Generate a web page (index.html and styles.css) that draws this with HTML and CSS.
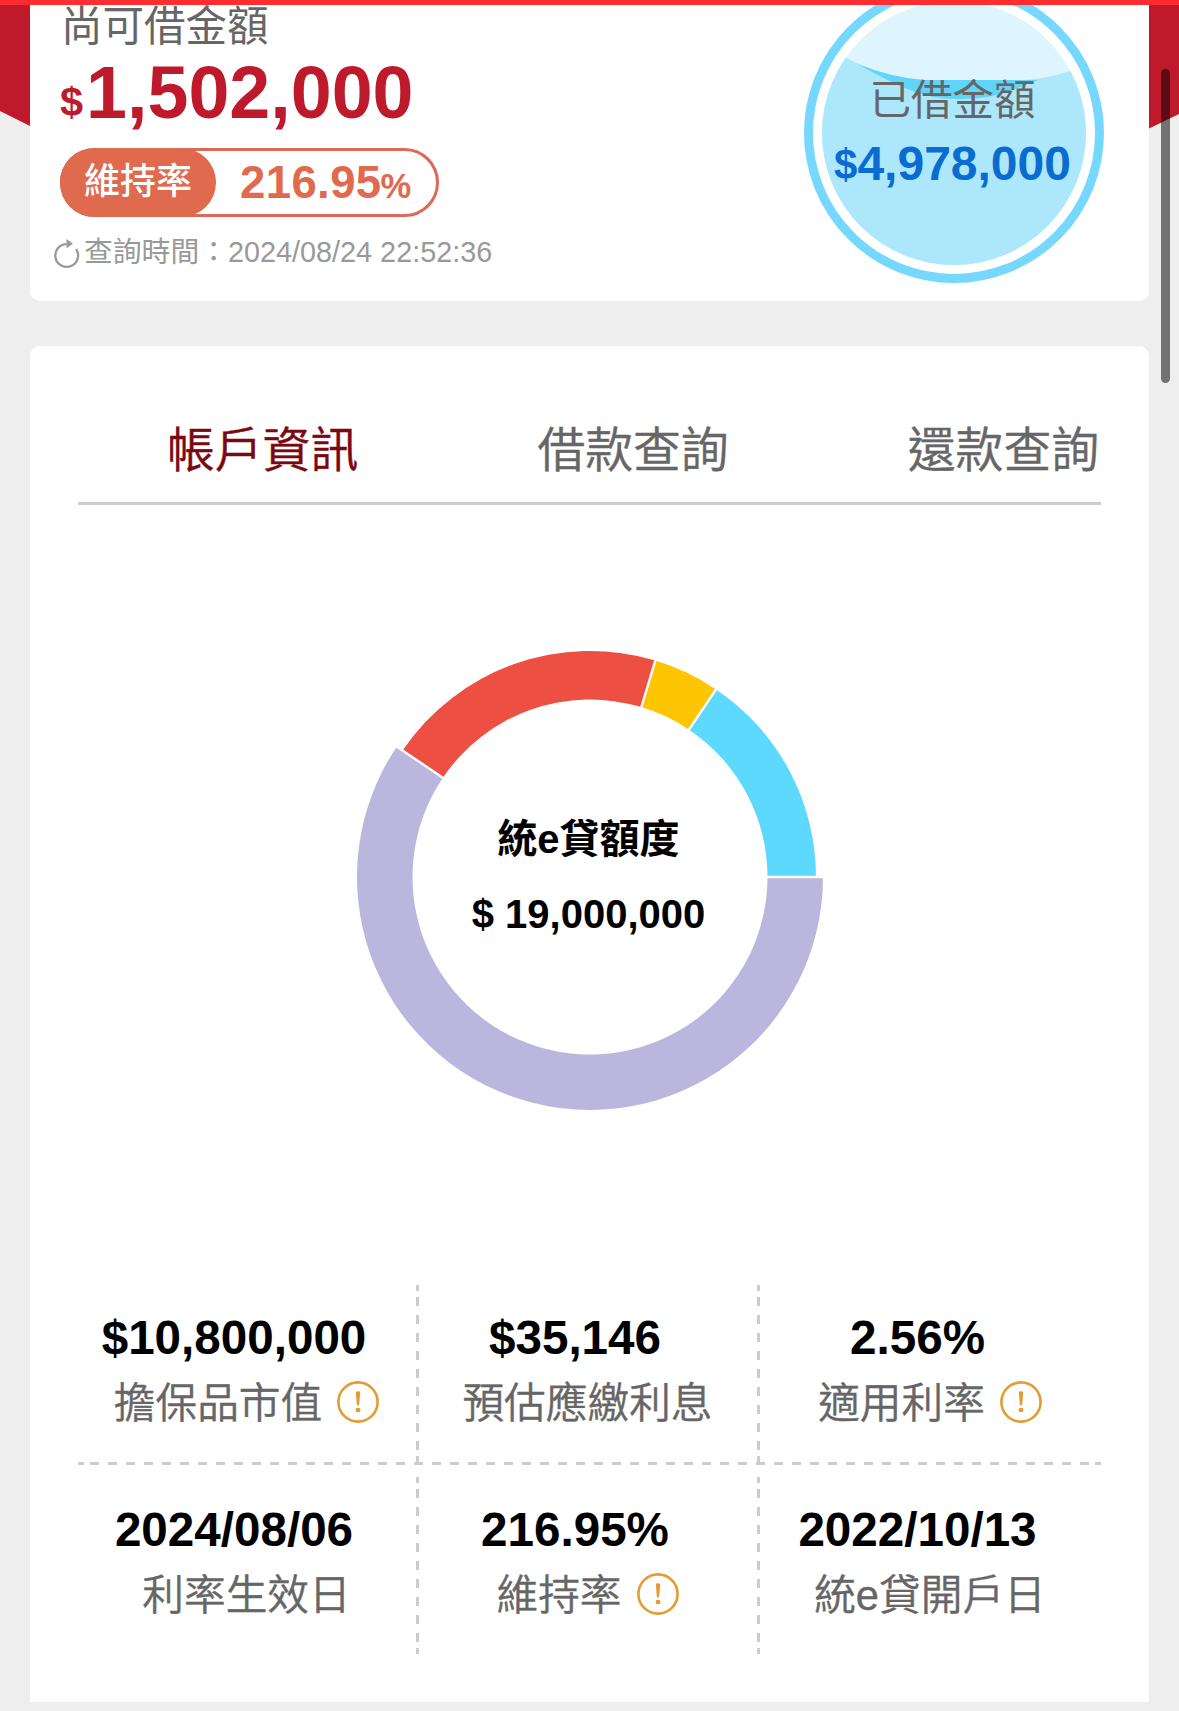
FILE: index.html
```
<!DOCTYPE html>
<html lang="zh-Hant">
<head>
  <meta charset="UTF-8">
  <title>統e貸</title>
  <link rel="stylesheet" href="styles.css">
</head>
<body>
  <div class="topline"></div>
  <div class="ribbon"></div>
  <div class="scrollbar"></div>

  <div class="card summary">
    <div class="summary-left">
      <div class="summary-title">尚可借金額</div>
      <div class="summary-amount"><span class="dollar">$</span>1,502,000</div>
      <div class="ratio">
        <div class="ratio-label">維持率</div>
        <div class="ratio-value">216.95<span class="percent">%</span></div>
      </div>
      <div class="query-time">
        <svg class="refresh" width="28" height="34" viewBox="0 0 28 34">
          <path d="M23.200 14.200 A11.400 11.400 0 1 1 13.700 9.100" fill="none" stroke="#999" stroke-width="2.300"/>
          <path d="M13.500 4 L20 8.700 L13.500 13.200 Z" fill="#999"/>
        </svg>
        <span>查詢時間：2024/08/24 22:52:36</span>
      </div>
    </div>

    <div class="gauge">
      <svg width="300" height="300" viewBox="0 0 300 300">
        <defs>
          <clipPath id="water"><circle cx="150" cy="150" r="132"/></clipPath>
        </defs>
        <circle cx="150" cy="150" r="145.5" fill="#fff" stroke="#76d8fe" stroke-width="9"/>
        <g clip-path="url(#water)">
          <rect width="300" height="300" fill="#dff5fe"/>
          <path d="M0 50 L42 75 Q80 94 120 97 H220 Q244 95.500 266 88 L300 76 V300 H0 Z" fill="#ace7fc"/>
          <path d="M54 81.300 Q88 95 120 97 H234 C200 110 190 116 153 116 C118 116 96 104 54 81.300 Z" fill="#5fd5fc"/>
        </g>
      </svg>
      <div class="gauge-text">
        <div class="gauge-title">已借金額</div>
        <div class="gauge-amount"><span class="dollar">$</span>4,978,000</div>
      </div>
    </div>
  </div>

  <div class="card detail">
    <div class="tabs">
      <div class="tab active">帳戶資訊</div>
      <div class="tab">借款查詢</div>
      <div class="tab">還款查詢</div>
    </div>

    <div class="chart">
      <svg width="480" height="480" viewBox="-240 -240 480 480">
        <path d="M226 0 A226 226 0 0 0 126 -187.600 L99 -147.300 A177.500 177.500 0 0 1 177.500 0 Z" fill="#5dd8ff"/>
        <path d="M126 -187.600 A226 226 0 0 0 65.300 -216.400 L51.300 -169.900 A177.500 177.500 0 0 1 99 -147.300 Z" fill="#fec504"/>
        <path d="M65.300 -216.400 A226 226 0 0 0 -187.400 -126.400 L-147.100 -99.300 A177.500 177.500 0 0 1 51.300 -169.900 Z" fill="#ed5042"/>
        <path d="M-193.200 -130.300 A233 233 0 1 0 233 0 L177.500 0 A177.500 177.500 0 1 1 -147.100 -99.300 Z" fill="#bbb6dd"/>
        <path d="M174 0 H236 M97 -144.400 L128 -190.600 M50.500 -167 L66.200 -219.300 M-144.200 -97.300 L-196 -132.200" stroke="#fff" stroke-width="2.400"/>
      </svg>
      <div class="chart-text">
        <div>統e貸額度</div>
        <div>$ 19,000,000</div>
      </div>
    </div>

    <div class="stats">
      <div class="stat">
        <div class="stat-value">$10,800,000</div>
        <div class="stat-label">擔保品市值
          <svg class="info" viewBox="0 0 42 42"><circle cx="21" cy="21" r="19.600"/><path d="M18.800 11.500 a2.200 1.300 0 0 1 4.400 0 L22.200 23.500 a1.200 1 0 0 1 -2.400 0 Z"/><ellipse cx="21" cy="29" rx="2.500" ry="2.200"/></svg>
        </div>
      </div>
      <div class="stat">
        <div class="stat-value">$35,146</div>
        <div class="stat-label">預估應繳利息</div>
      </div>
      <div class="stat">
        <div class="stat-value">2.56%</div>
        <div class="stat-label">適用利率
          <svg class="info" viewBox="0 0 42 42"><circle cx="21" cy="21" r="19.600"/><path d="M18.800 11.500 a2.200 1.300 0 0 1 4.400 0 L22.200 23.500 a1.200 1 0 0 1 -2.400 0 Z"/><ellipse cx="21" cy="29" rx="2.500" ry="2.200"/></svg>
        </div>
      </div>
    </div>
    <div class="divider"></div>
    <div class="stats">
      <div class="stat">
        <div class="stat-value">2024/08/06</div>
        <div class="stat-label">利率生效日</div>
      </div>
      <div class="stat">
        <div class="stat-value">216.95%</div>
        <div class="stat-label">維持率
          <svg class="info" viewBox="0 0 42 42"><circle cx="21" cy="21" r="19.600"/><path d="M18.800 11.500 a2.200 1.300 0 0 1 4.400 0 L22.200 23.500 a1.200 1 0 0 1 -2.400 0 Z"/><ellipse cx="21" cy="29" rx="2.500" ry="2.200"/></svg>
        </div>
      </div>
      <div class="stat">
        <div class="stat-value">2022/10/13</div>
        <div class="stat-label">統e貸開戶日</div>
      </div>
    </div>
  </div>
</body>
</html>
```
FILE: styles.css
```
* {
  box-sizing: border-box;
}
body {
  font-family: "Liberation Sans", "Noto Sans CJK TC", sans-serif;
  background: #eee;
  color: #666;
  margin: 0;
  height: 1711px;
  overflow: hidden;
  position: relative;
}
svg {
  display: block;
}
.topline {
  position: absolute;
  top: 0;
  left: 0;
  right: 0;
  height: 5px;
  background: #ff2d2f;
  z-index: 3;
}
.ribbon {
  position: absolute;
  top: 0;
  left: 0;
  right: 0;
  height: 130px;
  background: #be1a2b;
  clip-path: polygon(0 0, 100% 0, 100% 114px, 1149px 128.5px, 30px 126px, 0 111px);
}
.scrollbar {
  position: absolute;
  top: 69px;
  right: 9px;
  width: 9px;
  height: 314px;
  border-radius: 5px;
  background: rgba(0,0,0,0.52);
  z-index: 3;
}
.card {
  position: relative;
  background: white;
  margin: 0 30px;
}

/* summary */
.summary {
  display: flex;
  justify-content: space-between;
  height: 301px;
  padding: 6px 45px 0 30px;
  border-radius: 0 0 10px 10px;
  overflow: hidden;
}
.summary-title {
  padding-left: 1px;
  font-size: 41.5px;
  line-height: 42px;
}
.summary-amount {
  height: 89px;
  font-size: 73.6px;
  line-height: 89px;
  font-weight: bold;
  color: #be1a2b;
}
.summary-amount .dollar {
  font-size: 41.5px;
  line-height: 1;
  margin-right: 3px;
  vertical-align: 2px;
}
.ratio {
  display: flex;
  width: 379px;
  height: 69px;
  margin-top: 11px;
  border: 3px solid #db6a56;
  border-radius: 35px;
  color: #df6a4e;
}
.ratio-label {
  width: 156px;
  height: 69px;
  margin: -3px 0 0 -3px;
  padding-left: 24px;
  border-radius: 35px;
  background: #df6a4e;
  color: white;
  font-size: 36px;
  font-weight: 500;
  line-height: 67px;
}
.ratio-value {
  padding-left: 24px;
  font-size: 45.5px;
  font-weight: bold;
  letter-spacing: 0.4px;
  line-height: 63px;
}
.ratio-value .percent {
  font-size: 34.5px;
  line-height: 1;
  letter-spacing: 0;
  margin-left: -1px;
}
.query-time {
  display: flex;
  gap: 3px;
  margin: 18px 0 0 -7px;
  font-size: 28.8px;
  line-height: 34px;
  color: #999;
}

/* borrowed amount gauge */
.gauge {
  position: relative;
  width: 300px;
  margin-top: -23px;
}
.gauge-text {
  position: absolute;
  top: 92px;
  left: 0;
  right: 3px;
  text-align: center;
}
.gauge-title {
  font-size: 41.5px;
  line-height: 52px;
}
.gauge-amount {
  font-size: 48px;
  line-height: 74px;
  font-weight: bold;
  color: #0a6cd1;
}
.gauge-amount .dollar {
  font-size: 42px;
  line-height: 1;
  vertical-align: 1px;
}

/* account detail */
.detail {
  height: 1356px;
  margin-top: 45px;
  padding: 75px 48px 0;
  border-radius: 10px 10px 0 0;
}
.tabs {
  display: flex;
  justify-content: space-between;
  padding: 0 2px 21px 89px;
  border-bottom: 3px solid #ccc;
}
.tab {
  font-size: 47.8px;
  font-weight: 350;
  line-height: 60px;
  -webkit-text-stroke: 0.5px;
}
.tab.active {
  color: #7b0710;
}
.chart {
  position: relative;
  display: flex;
  justify-content: center;
  height: 780px;
  padding-top: 132px;
}
.chart-text {
  position: absolute;
  top: 297px;
  left: 0;
  right: 2px;
  text-align: center;
  font-size: 40px;
  font-weight: bold;
  line-height: 75px;
  color: #000;
}
.stats {
  display: grid;
  grid-template-columns: repeat(3, 341px);
}
.stat {
  height: 177px;
  padding: 23px 4px 0 0;
  text-align: center;
}
.stat:last-child {
  padding-right: 1px;
}
/* dashed line, 9px dashes with a short one at both ends */
.stat:not(:last-child) {
  background:
    linear-gradient(#ccc, #ccc) right top / 3px 6px no-repeat,
    linear-gradient(#ccc, #ccc) right bottom / 3px 6px no-repeat,
    linear-gradient(#ccc 9px, transparent 9px) right 0 top -6px / 3px 18px repeat-y;
}
.divider {
  height: 3px;
  margin-bottom: 12px;
  background:
    linear-gradient(#ccc, #ccc) left top / 6px 3px no-repeat,
    linear-gradient(#ccc, #ccc) right top / 6px 3px no-repeat,
    linear-gradient(90deg, #ccc 9px, transparent 9px) -6px 0 / 18px 3px repeat-x;
}
.stat-value {
  padding-right: 25px;
  font-size: 47.6px;
  font-weight: bold;
  line-height: 60px;
  color: #000;
}
.stat-label {
  display: flex;
  justify-content: center;
  align-items: center;
  gap: 15px;
  height: 60px;
  margin-top: 6px;
  font-size: 41.7px;
  font-weight: 350;
  line-height: 60px;
  -webkit-text-stroke: 0.4px;
}
.info {
  width: 42px;
  height: 42px;
  margin-top: -4px;
  fill: #e29c35;
}
.info circle {
  fill: none;
  stroke: #e29c35;
  stroke-width: 2.6;
}
```
